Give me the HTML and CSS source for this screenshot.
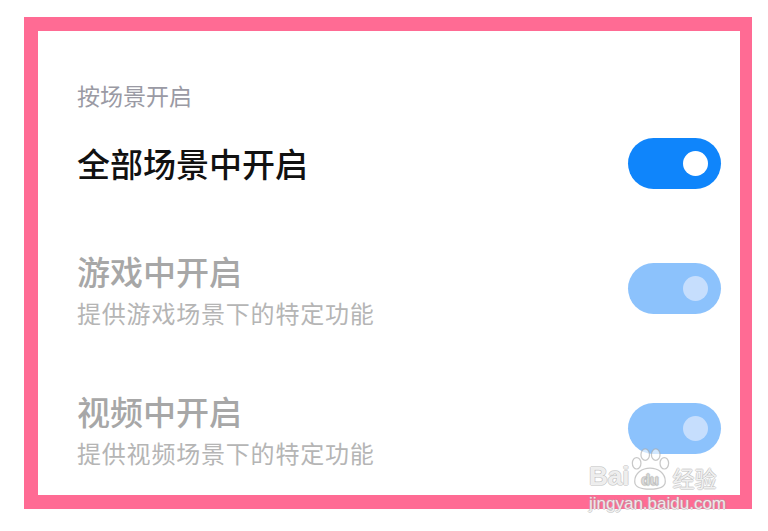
FILE: index.html
```html
<!DOCTYPE html>
<html lang="zh">
<head>
  <meta charset="UTF-8" />
  <meta name="viewport" content="width=device-width, initial-scale=1.0" />
  <title>按场景开启</title>
  <link rel="stylesheet" href="styles.css">
</head>
<body>
  <div class="frame">
    <div class="panel">
      <div class="section-label">按场景开启</div>

      <div class="row row-main">
        <div class="texts">
          <div class="title">全部场景中开启</div>
        </div>
        <div class="switch on"><span class="knob"></span></div>
      </div>

      <div class="row">
        <div class="texts">
          <div class="title disabled">游戏中开启</div>
          <div class="subtitle">提供游戏场景下的特定功能</div>
        </div>
        <div class="switch on off-state"><span class="knob"></span></div>
      </div>

      <div class="row">
        <div class="texts">
          <div class="title disabled">视频中开启</div>
          <div class="subtitle">提供视频场景下的特定功能</div>
        </div>
        <div class="switch on off-state"><span class="knob"></span></div>
      </div>
    </div>
  </div>

  <!-- Wasserzeichen -->
  <div class="watermark">
    <div class="wm-top">
      <span class="wm-bai">Bai</span>
      <svg class="wm-paw" width="44" height="42" viewBox="0 0 46 44">
        <g fill="rgba(255,255,255,0.6)" stroke="rgba(170,170,170,0.65)" stroke-width="1.3">
          <ellipse cx="9" cy="16" rx="4.5" ry="6"/>
          <ellipse cx="18" cy="7" rx="4.5" ry="6"/>
          <ellipse cx="29" cy="7" rx="4.5" ry="6"/>
          <ellipse cx="38" cy="16" rx="4.5" ry="6"/>
          <path d="M7 35 C7 26 15 21 23 21 C31 21 39 26 39 35 C39 42 31 43 23 43 C15 43 7 42 7 35 Z"/>
        </g>
        <text x="23" y="39" text-anchor="middle" class="wm-du">du</text>
      </svg>
      <span class="wm-jy">经验</span>
    </div>
    <div class="wm-url">jingyan.baidu.com</div>
  </div>
</body>
</html>
```

FILE: styles.css
```css
body {
  margin: 0;
  background-color: #ffffff;
  font-family: 'Noto Sans CJK SC', 'Noto Sans', sans-serif;
  width: 768px;
  height: 531px;
  position: relative;
  overflow: hidden;
}
.frame {
  margin: 17px 16px 0 24px;
  height: 492px;
  box-sizing: border-box;
  border: 14px solid #ff6b94;
  border-right-width: 12px;
  background-color: #ffffff;
}
.panel {
  height: 100%;
  box-sizing: border-box;
  padding: 49px 19px 0 39px;
  overflow: hidden;
}
.section-label {
  font-size: 23px;
  line-height: 30px;
  color: #9a9aa4;
}
.row {
  display: flex;
  align-items: center;
  justify-content: space-between;
  height: 140px;
  box-sizing: border-box;
  padding: 40px 0 18px;
}
.row-main {
  height: 96px;
  margin-top: 5px;
  padding: 0;
}
.title {
  font-size: 33px;
  line-height: 40px;
  color: #111111;
  font-weight: 500;
}
.title.disabled {
  color: #a7a7a7;
}
.subtitle {
  margin-top: 2px;
  font-size: 24px;
  line-height: 40px;
  letter-spacing: 0.8px;
  color: #b5b5b5;
}
.switch {
  position: relative;
  width: 93px;
  height: 51px;
  border-radius: 26px;
  background-color: #0f85fb;
  flex-shrink: 0;
}
.switch .knob {
  position: absolute;
  top: 13px;
  right: 13px;
  width: 25px;
  height: 25px;
  border-radius: 50%;
  background-color: #ffffff;
}
.switch.off-state {
  background-color: #8cc2fc;
  margin-bottom: 8px;
}
.switch.off-state .knob {
  background-color: #c6defd;
}
.watermark {
  position: absolute;
  left: 589px;
  top: 446px;
  width: 144px;
  color: rgba(255,255,255,0.8);
  text-shadow: 1px 0 0 rgba(170,170,170,0.45), -1px 0 0 rgba(170,170,170,0.45), 0 1px 0 rgba(170,170,170,0.45), 0 -1px 0 rgba(170,170,170,0.45);
  font-family: 'Liberation Sans', sans-serif;
}
.wm-top {
  display: flex;
  align-items: flex-end;
  height: 44px;
}
.wm-bai {
  font-size: 26px;
  line-height: 26px;
  font-weight: bold;
  margin-bottom: 1px;
}
.wm-paw {
  margin: 0 0 0 -1px;
}
.wm-du {
  font-size: 15px;
  font-weight: bold;
  fill: rgba(255,255,255,0.9);
  stroke: rgba(170,170,170,0.55);
  stroke-width: 0.6px;
  font-family: 'Liberation Sans', sans-serif;
}
.wm-jy {
  font-family: 'Noto Sans CJK SC', sans-serif;
  font-size: 22px;
  line-height: 24px;
  margin-bottom: 1px;
}
.wm-url {
  font-size: 17px;
  line-height: 20px;
  margin-top: 4px;
}
```
